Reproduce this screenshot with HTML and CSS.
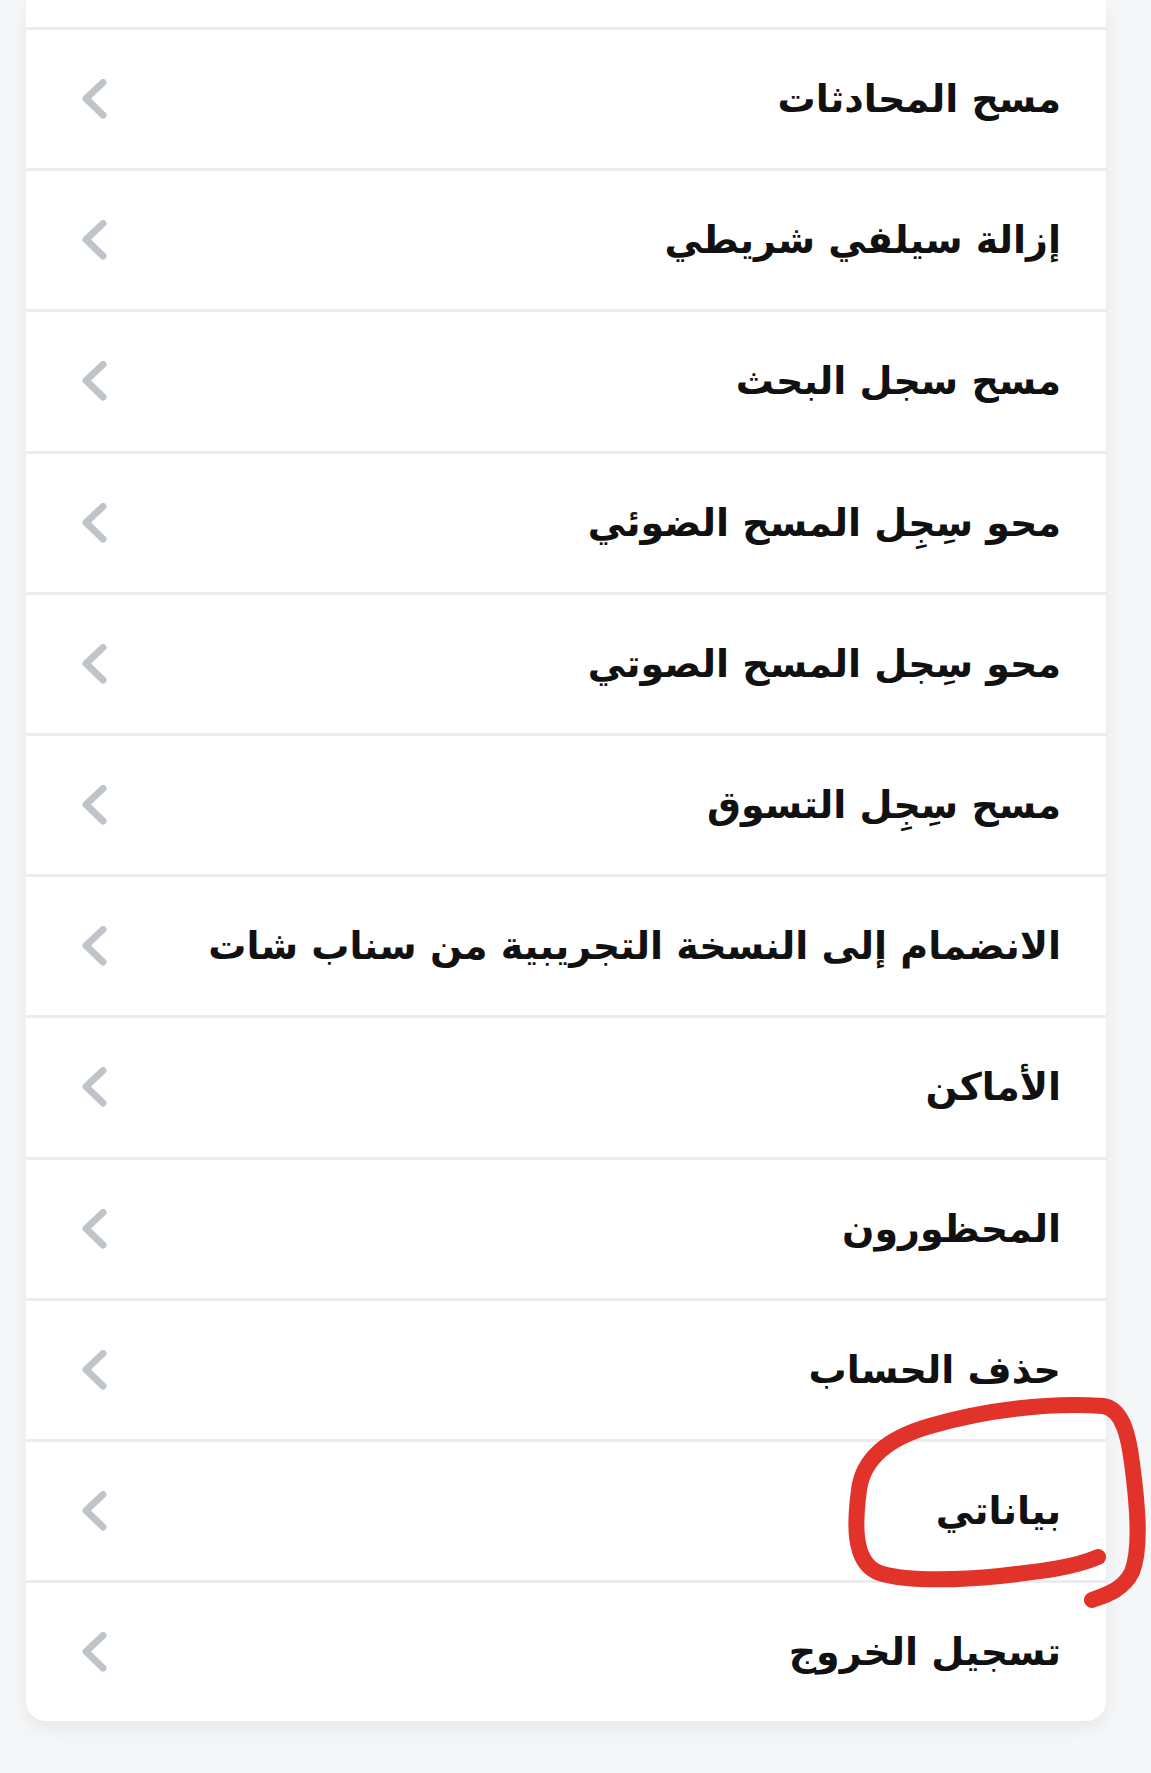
FILE: index.html
```html
<!DOCTYPE html>
<html lang="ar" dir="rtl">
<head>
    <meta charset="UTF-8">
    <meta name="viewport" content="width=device-width, initial-scale=1.0">
    <title>الإعدادات</title>
    <link rel="stylesheet" href="styles.css">
</head>
<body>

    <div class="card">
        <div class="row-stub"></div>
        <div class="row"><span class="label">مسح المحادثات</span><svg class="chev" viewBox="0 0 26 40"><path d="M21 3.5 L4 19.5 L21 36"/></svg></div>
        <div class="row"><span class="label">إزالة سيلفي شريطي</span><svg class="chev" viewBox="0 0 26 40"><path d="M21 3.5 L4 19.5 L21 36"/></svg></div>
        <div class="row"><span class="label">مسح سجل البحث</span><svg class="chev" viewBox="0 0 26 40"><path d="M21 3.5 L4 19.5 L21 36"/></svg></div>
        <div class="row"><span class="label">محو سِجِل المسح الضوئي</span><svg class="chev" viewBox="0 0 26 40"><path d="M21 3.5 L4 19.5 L21 36"/></svg></div>
        <div class="row"><span class="label">محو سِجل المسح الصوتي</span><svg class="chev" viewBox="0 0 26 40"><path d="M21 3.5 L4 19.5 L21 36"/></svg></div>
        <div class="row"><span class="label">مسح سِجِل التسوق</span><svg class="chev" viewBox="0 0 26 40"><path d="M21 3.5 L4 19.5 L21 36"/></svg></div>
        <div class="row"><span class="label">الانضمام إلى النسخة التجريبية من سناب شات</span><svg class="chev" viewBox="0 0 26 40"><path d="M21 3.5 L4 19.5 L21 36"/></svg></div>
        <div class="row"><span class="label">الأماكن</span><svg class="chev" viewBox="0 0 26 40"><path d="M21 3.5 L4 19.5 L21 36"/></svg></div>
        <div class="row"><span class="label">المحظورون</span><svg class="chev" viewBox="0 0 26 40"><path d="M21 3.5 L4 19.5 L21 36"/></svg></div>
        <div class="row"><span class="label">حذف الحساب</span><svg class="chev" viewBox="0 0 26 40"><path d="M21 3.5 L4 19.5 L21 36"/></svg></div>
        <div class="row"><span class="label">بياناتي</span><svg class="chev" viewBox="0 0 26 40"><path d="M21 3.5 L4 19.5 L21 36"/></svg></div>
        <div class="row"><span class="label">تسجيل الخروج</span><svg class="chev" viewBox="0 0 26 40"><path d="M21 3.5 L4 19.5 L21 36"/></svg></div>
    </div>

    <!-- hand drawn mark around "my data" -->
    <svg class="scribble" viewBox="0 0 1151 1773">
        <path d="M1098 1557 C1075 1567 1045 1571 1000 1576 C950 1581 900 1581 877 1572 C852 1560 855 1520 859 1490 C863 1458 888 1438 930 1426 C985 1410 1050 1402 1103 1406 C1124 1409 1129 1440 1132 1463 C1137 1500 1142 1547 1132 1572 C1123 1590 1106 1595 1092 1600"/>
    </svg>

</body>
</html>
```

FILE: styles.css
```css
body { margin: 0; background-color: #f5f6f8; font-family: "DejaVu Sans", sans-serif; position: relative; min-height: 1773px; }
.card { width: 1080px; margin-right: 45px; margin-left: 26px; background: #fff; border-radius: 0 0 20px 20px; box-shadow: 0 8px 16px rgba(0,0,0,0.06); overflow: hidden; }
.row-stub { height: 27px; }
.row { height: 138.2px; border-top: 3px solid #ececee; display: flex; align-items: center; justify-content: space-between; padding: 0 45px 0 56px; }
.label { font-size: 38px; font-weight: bold; color: #111; white-space: nowrap; }
.chev { width: 26px; height: 40px; flex: none; }
.chev path { fill: none; stroke: #bfc3ca; stroke-width: 7; stroke-linecap: round; stroke-linejoin: round; }
.scribble { position: absolute; top: 0; left: 0; width: 1151px; height: 1773px; pointer-events: none; }
.scribble path { fill: none; stroke: #e2332a; stroke-width: 16; stroke-linecap: round; stroke-linejoin: round; }
```
